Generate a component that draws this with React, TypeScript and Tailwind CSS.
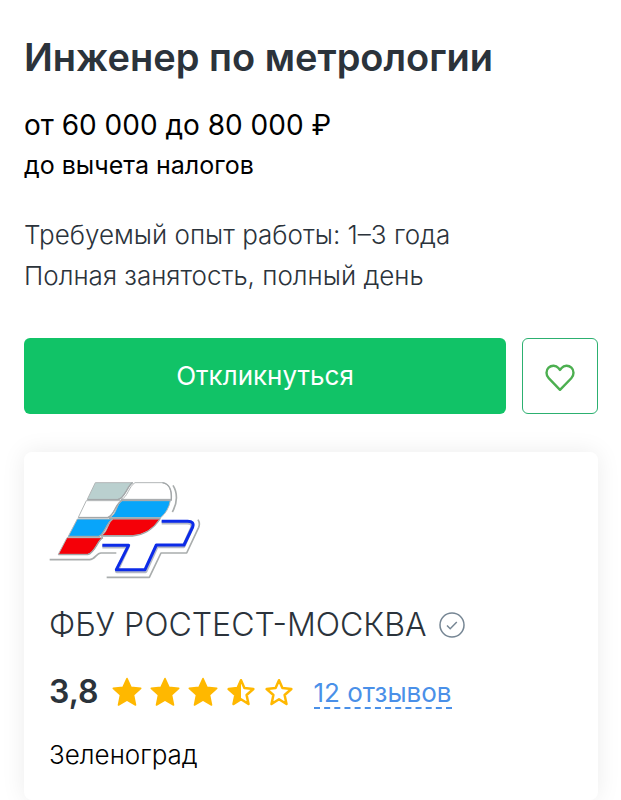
const STAR =
  "M15 1.500L19 10.300L28.700 11.400L21.500 17.900L23.500 28L15 23.100L6.500 28L8.500 17.900L1.300 11.400L11 10.300z";

const STAR_OUTLINE =
  "M15 3.200L18.400 11.100L27.400 12L20.600 18L22.500 27L15 22.200L7.500 27L9.400 18L2.600 12L11.600 11.100z";

type Fill = "full" | "half" | "empty";

const stars: Fill[] = ["full", "full", "full", "half", "empty"];

function Star({ fill }: { fill: Fill }) {
  return (
    <svg viewBox="0 0 30 30" className="h-[30px] w-[30px]" aria-hidden="true">
      {fill === "full" && (
        <path d={STAR} fill="#ffb800" stroke="#ffb800" strokeWidth="1.600" strokeLinejoin="round" />
      )}
      {fill !== "full" && (
        <path d={STAR_OUTLINE} fill="none" stroke="#ffb800" strokeWidth="2.500" strokeLinejoin="round" />
      )}
      {fill === "half" && (
        <path d="M15 2V22.800L7 27.500L8.800 18L2 11.800L11 10.500z" fill="#ffb800" />
      )}
    </svg>
  );
}

function HeartIcon() {
  return (
    <svg viewBox="0 0 30 28" className="h-7 w-[30px]" aria-hidden="true">
      <path
        d="M15 25.800L3.700 14.200C.7 11 .9 6.300 3.600 3.700C6.500 1 10.900 1.200 13.400 4L15 5.900L16.600 4C19.100 1.200 23.500 1 26.400 3.700C29.100 6.300 29.300 11 26.300 14.200z"
        fill="none"
        stroke="#4caf50"
        strokeWidth="2.400"
        strokeLinejoin="round"
      />
    </svg>
  );
}

function VerifiedIcon() {
  return (
    <svg viewBox="0 0 26 26" className="h-[26px] w-[26px] shrink-0" fill="none" stroke="#768694" aria-hidden="true">
      <circle cx="13" cy="13" r="12" strokeWidth="1.500" />
      <path d="M8 13.500l3.200 3.200 6.600-6.700" strokeWidth="1.500" />
    </svg>
  );
}

function Logo() {
  return (
    <svg viewBox="30 30 456 300" className="h-[100px] w-[152px]" role="img" aria-label="Ростест-Москва">
      {/* outer grey contour */}
      <g fill="none" stroke="#a9adad" strokeWidth="5" strokeLinejoin="round">
        <path d="M32 269H152C168 269 172 249 186 249H232" />
        <path d="M402 46C416 68 416 98 400 126" />
        <path d="M203 322H331L366 249H443L479 172Q484 160 477 149" />
      </g>

      {/* flag stripes */}
      <g stroke="#b3b7b8" strokeWidth="3" strokeLinejoin="round">
        <path d="M169 38H281C264 48 257 87 236 88H145z" fill="#bad0cf" />
        <path d="M288 38H370Q400 42 397 88H246C265 84 270 48 288 38z" fill="#fff" />
        <path d="M142 92H248C229 102 226 137 206 142H118z" fill="#fff" />
        <path d="M249 92H394Q388 124 365 143H210C233 137 231 102 249 92z" fill="#08a5fa" />
        <path d="M115 147H222C203 156 199 190 180 199H88z" fill="#08a5fa" />
        <path d="M223 147H363Q332 194 280 197H186C207 187 205 157 223 147z" fill="#f50008" />
        <path d="M84 203H192C176 210 168 249 146 253H58z" fill="#f50008" />
      </g>
      <g fill="none" stroke="#a3a7a9" strokeWidth="4">
        <path d="M145 89H236C257 87 264 48 281 38" />
        <path d="M118 143H206C226 137 229 102 248 92" />
        <path d="M88 200H180C199 190 203 156 222 147" />
        <path d="M58 254H146C168 249 176 210 192 203" />
        <path d="M246 90H397Q400 42 370 38" />
        <path d="M210 145H365M186 198H280Q332 194 363 147" />
      </g>

      {/* letter T */}
      <g fill="none" strokeLinejoin="round">
        <path
          d="M368 158H445Q464 158 458 175L434 229H354L320 304H233L267 230H190"
          stroke="#b4b9c6"
          strokeWidth="11"
        />
        <path
          d="M368 154H446Q467 154 461 171L435 225H352L318 299H232L269 226H190"
          stroke="#0c2be8"
          strokeWidth="9"
        />
      </g>
    </svg>
  );
}

export default function App() {
  return (
    <main className="overflow-hidden bg-white pt-[33px] pr-[23px] pl-6 font-['Inter',sans-serif] text-black">
      <h1 className="text-[38px] leading-[48px] font-semibold text-[#2b333b]">Инженер по метрологии</h1>

      <div className="mt-6">
        <p className="text-[28px] leading-10">от 60 000 до 80 000 ₽</p>
        <p className="text-[25px] leading-10">до вычета налогов</p>
      </div>

      <div className="mt-[29px] text-[26px] leading-[41px] font-light text-[#2b333b]">
        <p>Требуемый опыт работы: 1–3 года</p>
        <p>Полная занятость, полный день</p>
      </div>

      <div className="mt-[42px] flex gap-4">
        <button type="button" className="h-[76px] flex-1 rounded-md bg-[#11c367] pb-0.5 text-[26px] text-white">
          Откликнуться
        </button>
        <button
          type="button"
          aria-label="В избранное"
          className="flex h-[76px] w-[76px] items-center justify-center rounded-md border border-[#2cb070] pt-1"
        >
          <HeartIcon />
        </button>
      </div>

      <section className="mt-[38px] rounded-lg px-[25px] pt-7 pb-[25px] shadow-[0_0_24px_rgba(0,0,0,0.08)]">
        <Logo />
        <div className="mt-6 flex items-center gap-3">
          <h2 className="text-[32px] leading-[42px] font-light text-[#2b333b]">ФБУ РОСТЕСТ-МОСКВА</h2>
          <VerifiedIcon />
        </div>
        <div className="mt-[26px] flex items-center">
          <span className="text-[32px] leading-10 font-semibold text-[#2b333b]">3,8</span>
          <div className="ml-[13px] flex gap-2" role="img" aria-label="Рейтинг 3,8 из 5">
            {stars.map((fill, i) => (
              <Star key={i} fill={fill} />
            ))}
          </div>
          <a
            href="#reviews"
            className="ml-5 border-b-2 border-dashed border-[#4a90e8] pt-1 text-[26px] leading-7 text-[#4a90e8]"
          >
            12 отзывов
          </a>
        </div>
        <p className="mt-[23px] text-[26px] leading-10 font-light">Зеленоград</p>
      </section>
    </main>
  );
}
